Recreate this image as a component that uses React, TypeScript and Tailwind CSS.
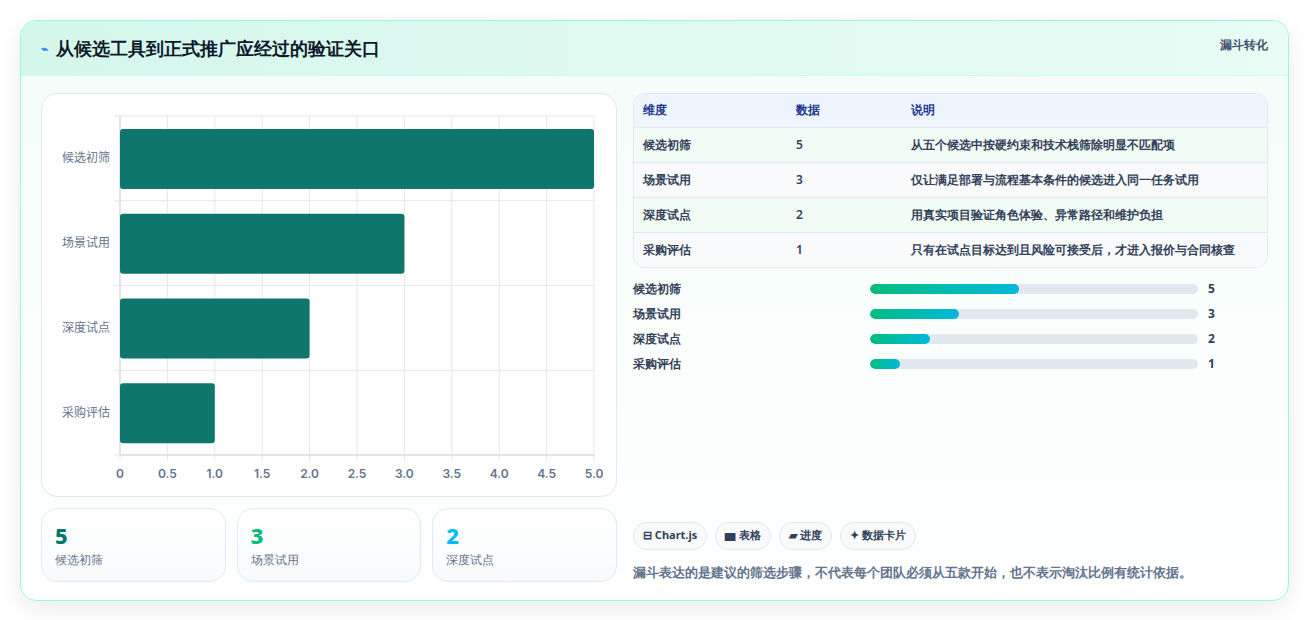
import React from "react";

const stages = [
  { name: "候选初筛", value: 5, note: "从五个候选中按硬约束和技术栈筛除明显不匹配项" },
  { name: "场景试用", value: 3, note: "仅让满足部署与流程基本条件的候选进入同一任务试用" },
  { name: "深度试点", value: 2, note: "用真实项目验证角色体验、异常路径和维护负担" },
  { name: "采购评估", value: 1, note: "只有在试点目标达到且风险可接受后，才进入报价与合同核查" },
];

const total = stages.reduce((s, x) => s + x.value, 0);

function BarChart() {
  // plot area inside card coordinates
  const x0 = 78, x1 = 552, y0 = 22, y1 = 361;
  const rowH = (y1 - y0) / 4;
  const ticks = [0, 0.5, 1, 1.5, 2, 2.5, 3, 3.5, 4, 4.5, 5];
  const sx = (v: number) => x0 + (v / 5) * (x1 - x0);
  return (
    <svg width="576" height="403" className="block">
      {ticks.map((t) => (
        <g key={t}>
          <line x1={sx(t)} x2={sx(t)} y1={y0} y2={y1 + 6} stroke="#e5e7eb" strokeWidth="1" />
          <text x={sx(t)} y={y1 + 23} textAnchor="middle" fontSize="12" fontWeight="600" fill="#64748b" fontFamily="Inter, 'Noto Sans CJK SC', sans-serif">
            {t.toFixed(t === 0 ? 0 : 1)}
          </text>
        </g>
      ))}
      {[0, 1, 2, 3, 4].map((i) => (
        <line key={i} x1={x0 - 6} x2={x1} y1={y0 + i * rowH} y2={y0 + i * rowH} stroke="#e5e7eb" strokeWidth="1" />
      ))}
      <line x1={x0} x2={x0} y1={y0} y2={y1} stroke="#d1d5db" />
      <line x1={x0} x2={x1} y1={y1} y2={y1} stroke="#d1d5db" />
      {stages.map((s, i) => (
        <g key={s.name}>
          <rect x={x0} y={y0 + i * rowH + 13} width={sx(s.value) - x0} height={60} rx="3" fill="#0f766e" />
          <text x={x0 - 10} y={y0 + i * rowH + rowH / 2 + 4} textAnchor="end" fontSize="12" fill="#64748b" fontFamily="'Noto Sans CJK SC', sans-serif">
            {s.name}
          </text>
        </g>
      ))}
    </svg>
  );
}

export default function App() {
  return (
    <div className="min-h-[620px] bg-white p-5 font-['Inter','Noto_Sans_CJK_SC',sans-serif]">
      <div className="rounded-2xl border border-teal-200 bg-gradient-to-b from-[#f3fdf9] to-white shadow-[0_8px_24px_rgba(15,23,42,0.08)] overflow-hidden">
        {/* Header */}
        <div className="h-[55px] flex items-start justify-between bg-gradient-to-r from-[#d4f7ec] to-[#e9fcf6] border-b border-teal-100 px-5">
          <h1 className="mt-[14px] flex items-center gap-2 text-[18px] font-bold text-[#0f172a]">
            <span className="text-[12px] text-blue-500">⌁</span>
            从候选工具到正式推广应经过的验证关口
          </h1>
          <span className="mt-[15px] text-[12px] font-bold text-slate-600">漏斗转化</span>
        </div>

        {/* Body */}
        <div className="flex gap-4 px-5 pt-[17px] pb-[18px]">
          {/* Left */}
          <div className="w-[576px] flex flex-col gap-[11px]">
            <div className="h-[404px] rounded-2xl border border-slate-200 bg-white">
              <BarChart />
            </div>
            <div className="grid grid-cols-3 gap-[11px]">
              {[
                { v: 5, c: "text-teal-700", n: "候选初筛" },
                { v: 3, c: "text-emerald-500", n: "场景试用" },
                { v: 2, c: "text-sky-400", n: "深度试点" },
              ].map((s) => (
                <div key={s.n} className="h-[74px] rounded-2xl border border-blue-100 bg-gradient-to-b from-white to-slate-50 px-[13px] pt-[12px]">
                  <div className={`text-[22px] leading-7 font-extrabold ${s.c}`}>{s.v}</div>
                  <div className="text-[12px] text-slate-500 mt-[2px]">{s.n}</div>
                </div>
              ))}
            </div>
          </div>

          {/* Right */}
          <div className="flex-1 flex flex-col">
            <div className="rounded-xl border border-slate-200 overflow-hidden bg-white">
              <table className="w-full text-[12px]">
                <thead>
                  <tr className="bg-[#eef5ff] text-blue-900 font-bold h-[33px] border-b border-slate-200">
                    <th className="text-left pl-[9px] w-[162px]">维度</th>
                    <th className="text-left w-[115px]">数据</th>
                    <th className="text-left">说明</th>
                  </tr>
                </thead>
                <tbody>
                  {stages.map((s, i) => (
                    <tr key={s.name} className={`h-[35px] text-slate-700 font-semibold ${i < 3 ? "border-b border-slate-200" : ""} ${i % 2 === 0 ? "bg-[#f2fcf7]" : "bg-[#f8fafc]"}`}>
                      <td className="pl-[9px]">{s.name}</td>
                      <td>{s.value}</td>
                      <td>{s.note}</td>
                    </tr>
                  ))}
                </tbody>
              </table>
            </div>

            <div className="mt-[12px] flex flex-col gap-[8px]">
              {stages.map((s) => (
                <div key={s.name} className="flex items-center h-[17px] text-[12px] font-semibold text-slate-700">
                  <span className="w-[237px]">{s.name}</span>
                  <div className="w-[328px] h-[10px] rounded-full bg-slate-200 overflow-hidden">
                    <div
                      className="h-full rounded-full bg-gradient-to-r from-emerald-500 to-cyan-500"
                      style={{ width: `${(s.value / total) * 100}%` }}
                    />
                  </div>
                  <span className="ml-[10px] font-bold">{s.value}</span>
                </div>
              ))}
            </div>

            <div className="mt-auto">
              <div className="flex gap-[8px]">
                {["⊟ Chart.js", "▆ 表格", "▰ 进度", "✦ 数据卡片"].map((c) => (
                  <span key={c} className="h-[28px] px-[9px] flex items-center rounded-full border border-slate-200 bg-slate-50 text-[11px] font-bold text-slate-700">
                    {c}
                  </span>
                ))}
              </div>
              <p className="mt-[13px] text-[13px] text-slate-500 font-semibold">
                漏斗表达的是建议的筛选步骤，不代表每个团队必须从五款开始，也不表示淘汰比例有统计依据。
              </p>
            </div>
          </div>
        </div>
      </div>
    </div>
  );
}
